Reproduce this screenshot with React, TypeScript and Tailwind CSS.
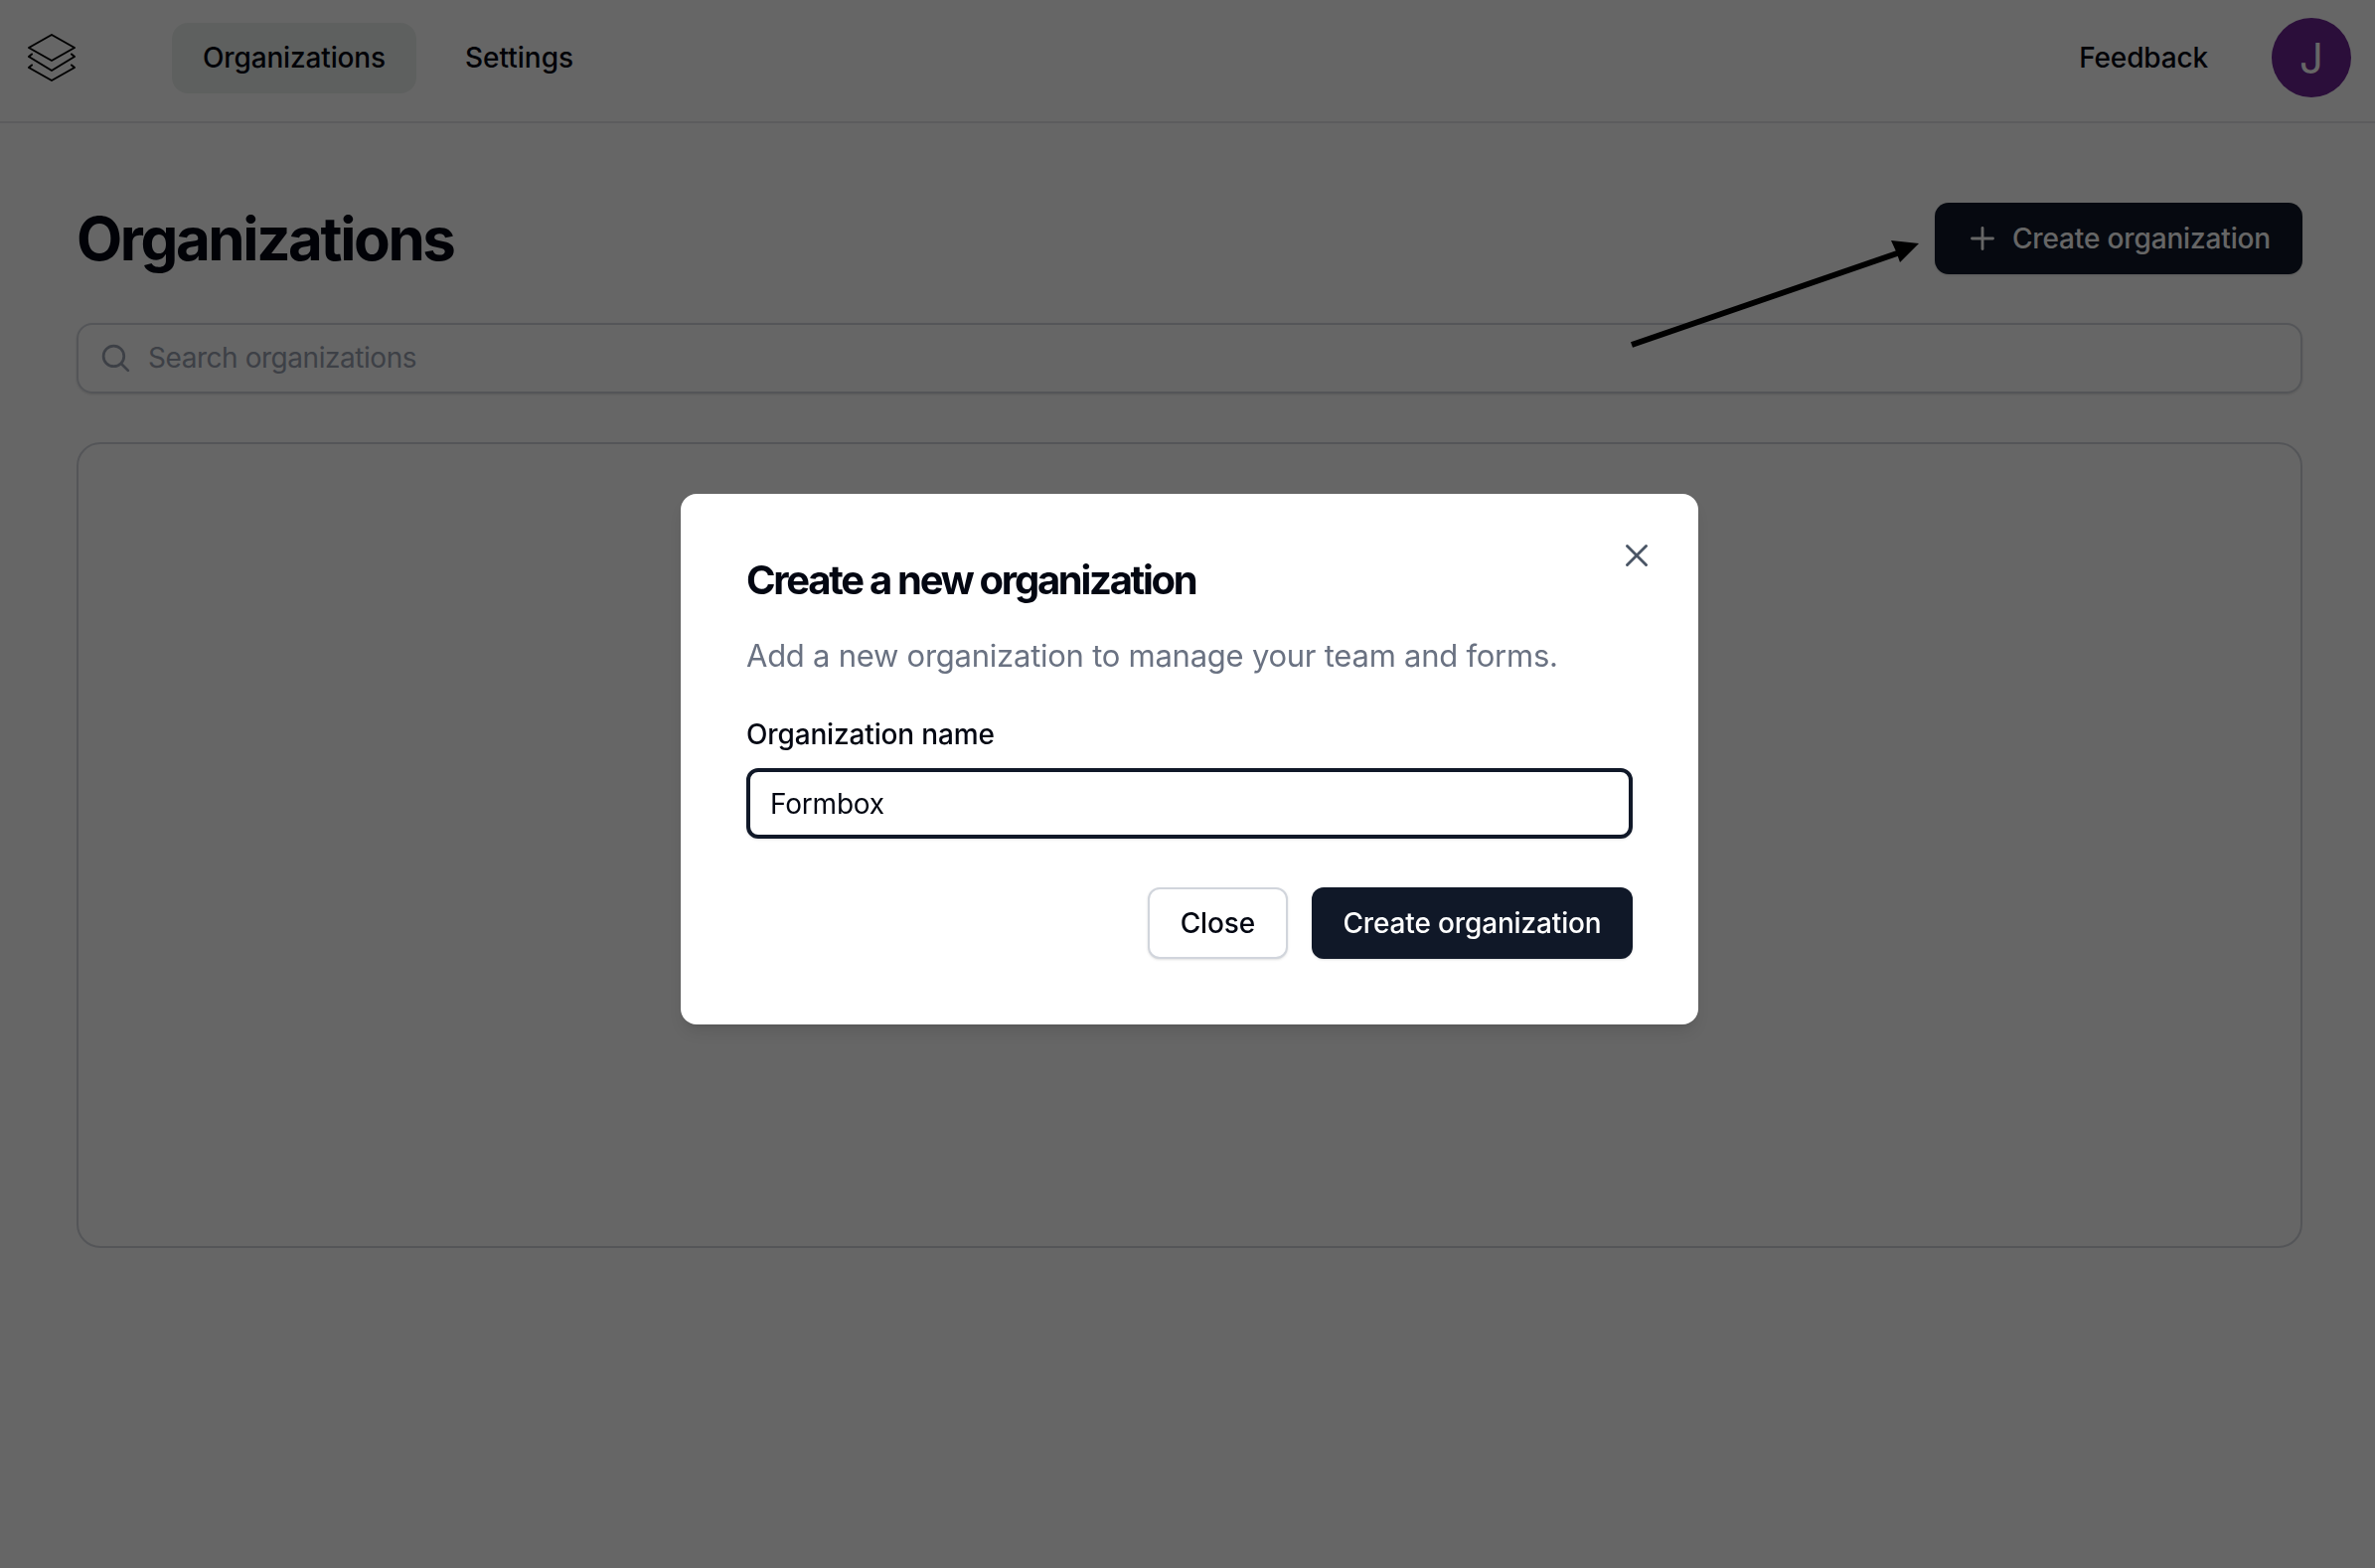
import { Plus, X } from 'lucide-react';

function Logo() {
  return (
    <svg width="48" height="48" viewBox="0 0 48 48" fill="none" stroke="#000" strokeWidth="2" strokeLinejoin="round" strokeLinecap="round">
      <path d="M24 1 L47 14 L24 27 L1 14 Z" />
      <path d="M4 20.5 L1 23 L24 37 L47 23 L44 20.5" />
      <path d="M4 31.5 L1 34 L24 47 L47 34 L44 31.5" />
    </svg>
  );
}

function SearchIcon() {
  return (
    <svg width="33" height="33" viewBox="0 0 24 24" fill="none" stroke="currentColor" strokeWidth="2" strokeLinecap="round" strokeLinejoin="round" className="text-gray-400">
      <path d="M21 21l-5.197-5.197m0 0A7.5 7.5 0 105.196 5.196a7.5 7.5 0 0010.607 10.607z" />
    </svg>
  );
}

function Arrow() {
  return (
    <svg className="absolute left-[1630px] top-[230px]" width="320" height="130" viewBox="0 0 320 130" fill="none">
      <line x1="12" y1="117" x2="282" y2="24" stroke="#000" strokeWidth="6" />
      <path d="M301 15 L273 12 L278 23 L282 34 Z" fill="#000" />
    </svg>
  );
}

export default function App() {
  return (
    <div className="relative min-h-[1578px] bg-white font-['Inter',sans-serif] text-[#030712]">
      <header className="flex h-[124px] items-center justify-between border-b-2 border-gray-200 pb-[6px] pl-[28px] pr-[24px]">
        <div className="flex items-center">
          <Logo />
          <nav className="ml-[97px] flex items-center gap-[8px]">
            <a className="flex h-[71px] items-center rounded-[16px] bg-[#ecf1ee] px-[31px] text-[28px] font-medium tracking-[-0.15px]">Organizations</a>
            <a className="ml-[1px] flex h-[71px] items-center rounded-[16px] px-[40px] text-[28px] font-medium">Settings</a>
          </nav>
        </div>
        <div className="flex items-center gap-[64px]">
          <a className="text-[28px] font-medium tracking-[-0.15px]">Feedback</a>
          <div className="flex h-[80px] w-[80px] items-center justify-center rounded-full bg-[#6b2391] text-[42px] text-white">J</div>
        </div>
      </header>

      <main className="pl-[77px] pr-[73px] pt-[80px]">
        <div className="flex items-center justify-between">
          <h1 className="text-[60px] font-bold leading-[72px] tracking-[-0.04em]">Organizations</h1>
          <button className="flex h-[72px] items-center gap-[12px] rounded-[14px] bg-gray-900 pl-[30px] pr-[32px] text-[28px] font-medium tracking-[-0.15px] text-white shadow-sm">
            <Plus size={36} strokeWidth={1.9} />
            Create organization
          </button>
        </div>

        <div className="mt-[49px] flex h-[71px] items-center gap-[16px] rounded-[16px] border-2 border-gray-300 px-[21px] shadow-sm">
          <SearchIcon />
          <span className="pb-[2px] text-[28px] tracking-[-0.45px] text-gray-400">Search organizations</span>
        </div>

        <div className="mt-[49px] h-[811px] rounded-[24px] border-2 border-gray-300" />
      </main>

      <div className="fixed inset-0 bg-black/60" />
      <Arrow />

      <div className="fixed inset-0 flex justify-center pl-[4px] pt-[497px]">
        <div className="relative h-[534px] w-[1024px] rounded-[16px] bg-white px-[66px] py-[66px] shadow-lg">
          <button className="absolute right-[43px] top-[43px] text-gray-600">
            <X size={38} strokeWidth={1.8} />
          </button>
          <h2 className="mt-[1px] text-[40px] font-bold leading-[40px] tracking-[-0.057em]">Create a new organization</h2>
          <p className="mt-[32px] text-[31px] leading-[48px] tracking-[-0.25px] text-gray-500">Add a new organization to manage your team and forms.</p>
          <label className="mt-[35px] block text-[28px] font-medium leading-[40px] tracking-[-0.15px]">Organization name</label>
          <div className="mt-[14px] flex h-[71px] items-center rounded-[12px] border-[4px] border-gray-900 px-[20px] text-[28px] tracking-[-0.2px] shadow-sm">Formbox</div>
          <div className="mt-[49px] flex justify-end gap-[24px]">
            <button className="h-[72px] rounded-[12px] border-2 border-gray-300 bg-white px-[31px] text-[28px] font-medium tracking-[-0.15px] shadow-sm">Close</button>
            <button className="h-[72px] rounded-[12px] bg-gray-900 px-[31.5px] text-[28px] font-medium tracking-[-0.15px] text-white shadow-sm">Create organization</button>
          </div>
        </div>
      </div>
    </div>
  );
}
